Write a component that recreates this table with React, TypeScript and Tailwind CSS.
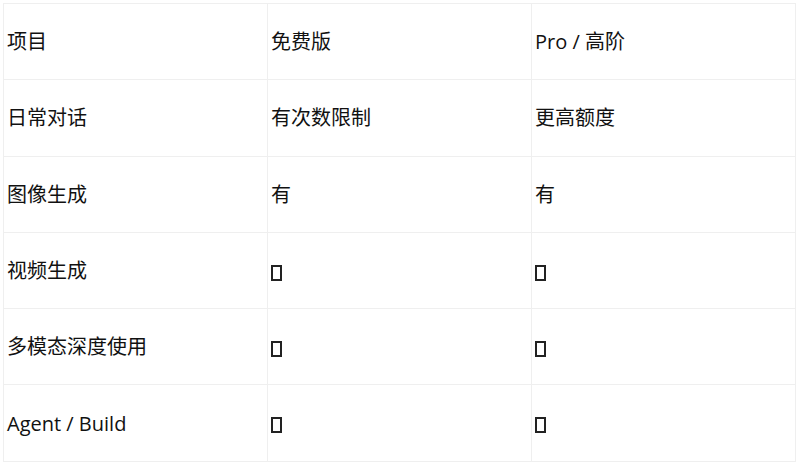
import React from "react";

const rows: [string, string, string][] = [
  ["项目", "免费版", "Pro / 高阶"],
  ["日常对话", "有次数限制", "更高额度"],
  ["图像生成", "有", "有"],
  ["视频生成", "□", "□"],
  ["多模态深度使用", "□", "□"],
  ["Agent / Build", "□", "□"],
];

const Cell = ({ value }: { value: string }) => {
  if (value === "□") {
    return (
      <span
        aria-label="missing glyph"
        className="inline-block w-[11px] h-[16px] border-2 border-[#222] align-middle"
      />
    );
  }
  return <span>{value}</span>;
};

const App = () => {
  return (
    <div className="w-[800px] h-[465px] bg-white pt-[3px] pl-[3px]">
      <table
        className="w-[793px] border-collapse table-fixed text-[20px] text-[#111]"
        style={{ fontFamily: '"Open Sans", "Noto Sans CJK SC", sans-serif' }}
      >
        <tbody>
          {rows.map((row, i) => (
            <tr key={i} className="h-[76.3px]">
              {row.map((cell, j) => (
                <td
                  key={j}
                  className="border border-[#efefef] pl-[3px] pt-[1px] align-middle leading-none"
                >
                  <Cell value={cell} />
                </td>
              ))}
            </tr>
          ))}
        </tbody>
      </table>
    </div>
  );
};

export default App;
